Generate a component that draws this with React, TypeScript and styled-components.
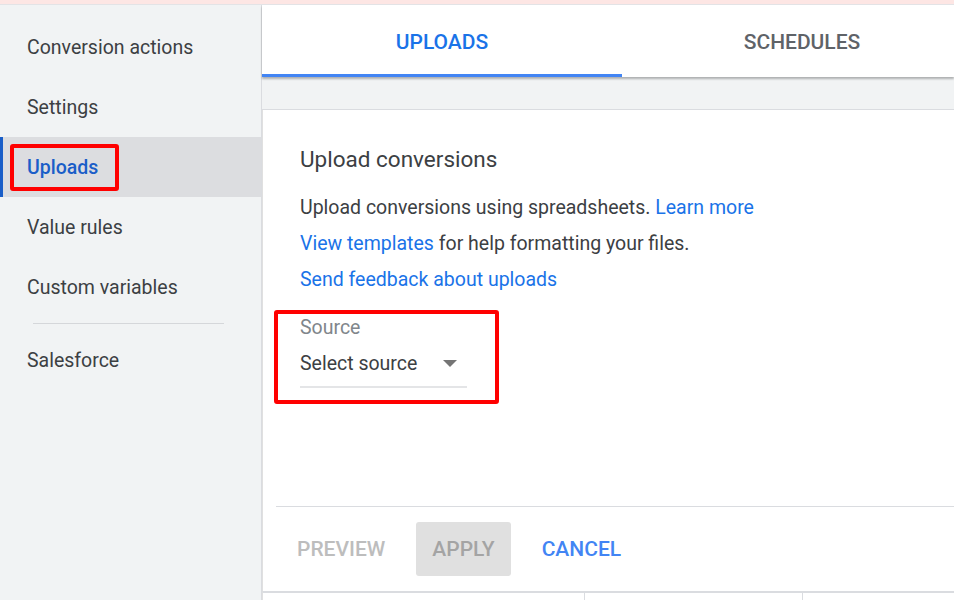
import React from "react";
import styled, { createGlobalStyle } from "styled-components";

const GlobalStyle = createGlobalStyle`
    html, body {
        margin: 0;
        padding: 0;
        background: #ffffff;
        font-family: Roboto, "Liberation Sans", Arial, sans-serif;
        overflow: hidden;
    }
`;

const Page = styled.div`
    width: 954px;
    height: 600px;
    display: flex;
    flex-direction: column;
    overflow: hidden;
`;

const AlertStrip = styled.div`
    height: 4px;
    flex-shrink: 0;
    background: #fde6e4;
    border-bottom: 1px solid #e3e3e6;
`;

const Body = styled.div`
    flex: 1;
    display: flex;
    min-height: 0;
`;

const Sidebar = styled.nav`
    width: 262px;
    flex-shrink: 0;
    background: #f1f3f4;
    border-right: 1px solid #dadce0;
    padding-top: 12px;
    box-sizing: border-box;
`;

const NavItem = styled.div<{ $active?: boolean }>`
    height: 60px;
    display: flex;
    align-items: center;
    padding-left: 24px;
    font-size: 19.5px;
    color: ${p => (p.$active ? "#1a5ec8" : "#3c4043")};
    font-weight: ${p => (p.$active ? 500 : 400)};
    background: ${p => (p.$active ? "#dcdde0" : "transparent")};
    border-left: 3px solid ${p => (p.$active ? "#1a5ec8" : "transparent")};
`;

const NavDivider = styled.hr`
    border: none;
    border-top: 1px solid #d5d7da;
    margin: 6px 37px 6px 33px;
`;

const Highlight = styled.span`
    border: 4px solid #ff0000;
    border-radius: 3px;
    display: inline-block;
`;

const NavHighlight = styled(Highlight)`
    margin-left: -17px;
    padding: 8px 17px 7px 13px;
    line-height: 24px;
`;

const Main = styled.div`
    flex: 1;
    display: flex;
    flex-direction: column;
    min-width: 0;
    background: #f1f3f4;
`;

const TabBar = styled.div`
    height: 72px;
    flex-shrink: 0;
    display: flex;
    background: #ffffff;
    box-shadow: 0 2px 2px rgba(0, 0, 0, 0.28);
    position: relative;
    z-index: 1;
`;

const Tab = styled.div<{ $active?: boolean }>`
    width: 360px;
    flex-shrink: 0;
    display: flex;
    align-items: center;
    justify-content: center;
    font-size: 21px;
    font-weight: 500;
    color: ${p => (p.$active ? "#1a73e8" : "#5f6368")};
    border-bottom: 3px solid ${p => (p.$active ? "#4285f4" : "transparent")};
    box-sizing: border-box;
    padding-top: 4px;
`;

const Band = styled.div`
    height: 32px;
    flex-shrink: 0;
    border-bottom: 1px solid #dadce0;
`;

const Card = styled.section`
    height: 481px;
    flex-shrink: 0;
    background: #ffffff;
    border-left: 1px solid #e0e0e0;
    display: flex;
    flex-direction: column;
    box-sizing: border-box;
`;

const CardBody = styled.div`
    padding: 37px 0 0 37px;
    flex: 1;
`;

const Title = styled.h2`
    margin: 0 0 19px;
    font-size: 22.5px;
    font-weight: 400;
    line-height: 24px;
    color: #3c4043;
`;

const Line = styled.p`
    margin: 0;
    font-size: 19.5px;
    line-height: 36px;
    color: #3c4043;
`;

const Link = styled.a`
    color: #1a73e8;
    text-decoration: none;
`;

const SourceBox = styled(Highlight)`
    margin: 12px 0 0 -26px;
    padding: 2px 28px 12px 22px;
`;

const FieldLabel = styled.div`
    font-size: 19.5px;
    line-height: 24px;
    color: #80868b;
`;

const Select = styled.div`
    width: 167px;
    height: 48px;
    display: flex;
    align-items: center;
    justify-content: space-between;
    font-size: 19.5px;
    color: #3c4043;
    border-bottom: 2px solid #e4e5e7;
    box-sizing: border-box;
    padding-right: 10px;
`;

const Caret = styled.span`
    width: 0;
    height: 0;
    border-left: 7px solid transparent;
    border-right: 7px solid transparent;
    border-top: 7px solid #757575;
`;

const Footer = styled.div`
    margin-left: 13px;
    border-top: 1px solid #dadce0;
    padding: 15px 0 15px 5px;
    display: flex;
    gap: 15px;
`;

const Button = styled.button<{ $variant: "disabled" | "filled" | "primary" }>`
    height: 54px;
    padding: 0 16px;
    border: none;
    border-radius: 3px;
    font-family: inherit;
    font-size: 21px;
    font-weight: 500;
    background: ${p => (p.$variant === "filled" ? "#e0e0e0" : "transparent")};
    color: ${p =>
        p.$variant === "primary" ? "#4285f4" : p.$variant === "filled" ? "#a4a4a4" : "#bdbdbd"};
`;

const TableHead = styled.div`
    flex: 1;
    display: flex;
    background: #ffffff;
    border-top: 2px solid #dadce0;
    border-left: 1px solid #e0e0e0;
`;

const HeadCell = styled.div<{ $width: number }>`
    width: ${p => p.$width}px;
    flex-shrink: 0;
    border-right: 1px solid #dadce0;
`;

const navItems = ["Conversion actions", "Settings", "Uploads", "Value rules", "Custom variables"];

export default function App() {
    return (
        <Page>
            <GlobalStyle />
            <AlertStrip />
            <Body>
                <Sidebar>
                    {navItems.map(item =>
                        item === "Uploads" ? (
                            <NavItem key={item} $active>
                                <NavHighlight>{item}</NavHighlight>
                            </NavItem>
                        ) : (
                            <NavItem key={item}>{item}</NavItem>
                        )
                    )}
                    <NavDivider />
                    <NavItem>Salesforce</NavItem>
                </Sidebar>
                <Main>
                    <TabBar>
                        <Tab $active>UPLOADS</Tab>
                        <Tab>SCHEDULES</Tab>
                    </TabBar>
                    <Band />
                    <Card>
                        <CardBody>
                            <Title>Upload conversions</Title>
                            <Line>
                                Upload conversions using spreadsheets. <Link href="#">Learn more</Link>
                            </Line>
                            <Line>
                                <Link href="#">View templates</Link> for help formatting your files.
                            </Line>
                            <Line>
                                <Link href="#">Send feedback about uploads</Link>
                            </Line>
                            <SourceBox>
                                <FieldLabel>Source</FieldLabel>
                                <Select>
                                    Select source
                                    <Caret />
                                </Select>
                            </SourceBox>
                        </CardBody>
                        <Footer>
                            <Button $variant="disabled">PREVIEW</Button>
                            <Button $variant="filled">APPLY</Button>
                            <Button $variant="primary">CANCEL</Button>
                        </Footer>
                    </Card>
                    <TableHead>
                        <HeadCell $width={321} />
                        <HeadCell $width={217} />
                    </TableHead>
                </Main>
            </Body>
        </Page>
    );
}
